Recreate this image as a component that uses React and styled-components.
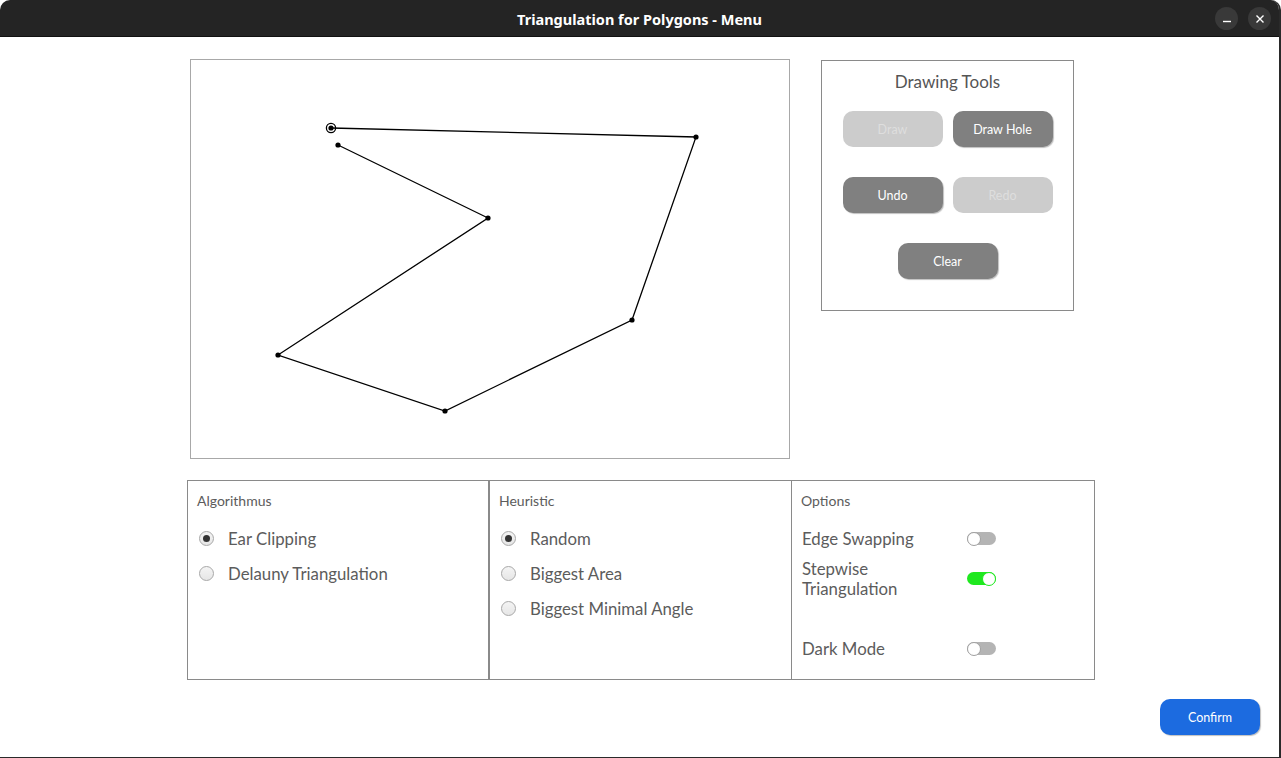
import styled, { createGlobalStyle } from 'styled-components'

const font = "'Lato', 'Open Sans', sans-serif";

const GlobalStyle = createGlobalStyle`
    html, body {
        margin: 0;
        padding: 0;
        background: #ffffff;
    }
    * {
        box-sizing: border-box;
    }
`

const points = [
    [140, 68], [505, 77], [441, 260], [254, 351], [87, 295], [297, 158], [147, 85]
]

function Radio({ label, checked }) {
    return (
        <RadioRow>
            <RadioCircle checked={checked} />
            <RadioText>{label}</RadioText>
        </RadioRow>
    )
}

function App() {
    return (
        <>
            <GlobalStyle />
            <Window>
                <TitleBar>
                    <Title>Triangulation for Polygons - Menu</Title>
                    <Controls>
                        <CtrlButton>
                            <svg width="10" height="10" viewBox="0 0 10 10">
                                <line x1="1" y1="7.5" x2="9" y2="7.5" stroke="#fff" strokeWidth="1.4" />
                            </svg>
                        </CtrlButton>
                        <CtrlButton>
                            <svg width="10" height="10" viewBox="0 0 10 10">
                                <path d="M1.5 1.5 L8.5 8.5 M8.5 1.5 L1.5 8.5" stroke="#fff" strokeWidth="1.4" />
                            </svg>
                        </CtrlButton>
                    </Controls>
                </TitleBar>
                <Content>
                    <TopRow>
                        <Canvas>
                            <svg width="598" height="398" viewBox="0 0 598 398">
                                <polyline
                                    points={points.map(p => p.join(',')).join(' ')}
                                    fill="none"
                                    stroke="#000"
                                    strokeWidth="1.3"
                                />
                                {points.map((p, i) => (
                                    <circle key={i} cx={p[0]} cy={p[1]} r="2.6" fill="#000" />
                                ))}
                                <circle cx={points[0][0]} cy={points[0][1]} r="4.6" fill="none" stroke="#000" strokeWidth="1.3" />
                            </svg>
                        </Canvas>
                        <ToolsPanel>
                            <ToolsTitle>Drawing Tools</ToolsTitle>
                            <ToolsGrid>
                                <ToolButton disabled>Draw</ToolButton>
                                <ToolButton>Draw Hole</ToolButton>
                                <ToolButton>Undo</ToolButton>
                                <ToolButton disabled>Redo</ToolButton>
                                <ToolButton wide>Clear</ToolButton>
                            </ToolsGrid>
                        </ToolsPanel>
                    </TopRow>
                    <BottomRow>
                        <Group width={302}>
                            <GroupLabel>Algorithmus</GroupLabel>
                            <Radio label="Ear Clipping" checked />
                            <Radio label="Delauny Triangulation" />
                        </Group>
                        <Group width={303} overlap>
                            <GroupLabel>Heuristic</GroupLabel>
                            <Radio label="Random" checked />
                            <Radio label="Biggest Area" />
                            <Radio label="Biggest Minimal Angle" />
                        </Group>
                        <Group width={304}>
                            <GroupLabel>Options</GroupLabel>
                            <OptionRow>
                                <OptionText>Edge Swapping</OptionText>
                                <Toggle />
                            </OptionRow>
                            <OptionRow tall>
                                <OptionText>Stepwise<br />Triangulation</OptionText>
                                <Toggle on />
                            </OptionRow>
                            <OptionRow gap>
                                <OptionText>Dark Mode</OptionText>
                                <Toggle />
                            </OptionRow>
                        </Group>
                    </BottomRow>
                    <Footer>
                        <ConfirmButton>Confirm</ConfirmButton>
                    </Footer>
                </Content>
            </Window>
        </>
    )
}

const Window = styled.div`
    width: 1281px;
    height: 758px;
    display: flex;
    flex-direction: column;
    background: #ffffff;
    border-right: 2px solid #2a2a2a;
    border-bottom: 1px solid #2a2a2a;
    border-radius: 10px 10px 0 0;
    overflow: hidden;
`

const TitleBar = styled.div`
    height: 37px;
    flex-shrink: 0;
    background: #242424;
    border-bottom: 1px solid #111;
    display: flex;
    align-items: center;
    justify-content: center;
    position: relative;
`

const Title = styled.div`
    font-family: 'Noto Sans', 'DejaVu Sans', sans-serif;
    font-weight: 700;
    font-size: 14.5px;
    color: #ffffff;
    margin-top: 1px;
`

const Controls = styled.div`
    position: absolute;
    right: 8px;
    top: 7px;
    display: flex;
    gap: 10px;
`

const CtrlButton = styled.div`
    width: 23px;
    height: 23px;
    border-radius: 50%;
    background: #393939;
    display: flex;
    align-items: center;
    justify-content: center;
`

const Content = styled.div`
    flex: 1;
    display: flex;
    flex-direction: column;
`

const TopRow = styled.div`
    display: flex;
    align-items: flex-start;
    gap: 31px;
    margin-top: 22px;
    margin-left: 190px;
`

const Canvas = styled.div`
    width: 600px;
    height: 400px;
    border: 1px solid #a8a8a8;
    background: #ffffff;
    svg {
        display: block;
    }
`

const ToolsPanel = styled.div`
    margin-top: 1px;
    width: 253px;
    height: 251px;
    border: 1px solid #8a8a8a;
    display: flex;
    flex-direction: column;
    align-items: center;
`

const ToolsTitle = styled.div`
    font-family: ${font};
    font-size: 17px;
    color: #555;
    margin-top: 11px;
    line-height: 20px;
`

const ToolsGrid = styled.div`
    margin-top: 19px;
    display: grid;
    grid-template-columns: 100px 100px;
    column-gap: 10px;
    row-gap: 30px;
    justify-content: center;
`

const ToolButton = styled.button`
    font-family: ${font};
    font-size: 12.5px;
    width: 100px;
    height: 36px;
    border: none;
    border-radius: 10px;
    background: ${p => p.disabled ? '#cccccc' : '#808080'};
    color: ${p => p.disabled ? '#dedede' : '#ffffff'};
    box-shadow: ${p => p.disabled ? 'none' : '1px 1px 1px rgba(0,0,0,0.25)'};
    grid-column: ${p => p.wide ? '1 / span 2' : 'auto'};
    justify-self: center;
    padding: 0;
`

const BottomRow = styled.div`
    display: flex;
    margin-top: 21px;
    margin-left: 187px;
`

const Group = styled.div`
    width: ${p => p.width}px;
    height: 200px;
    border: 1px solid #8a8a8a;
    margin-right: ${p => p.overlap ? '-1px' : '0'};
    padding: 11px 9px 0 9px;
    display: flex;
    flex-direction: column;
`

const GroupLabel = styled.div`
    font-family: ${font};
    font-size: 14px;
    color: #5c5c5c;
    line-height: 18px;
    margin-bottom: 11px;
`

const RadioRow = styled.div`
    display: flex;
    align-items: center;
    height: 35px;
`

const RadioCircle = styled.span`
    width: 15px;
    height: 15px;
    border-radius: 50%;
    border: 1px solid #a8a8a8;
    background: linear-gradient(#f4f4f4, #e6e6e6);
    display: flex;
    align-items: center;
    justify-content: center;
    margin-left: 2px;
    &::after {
        content: '';
        width: 7px;
        height: 7px;
        border-radius: 50%;
        background: #333;
        display: ${p => p.checked ? 'block' : 'none'};
    }
`

const RadioText = styled.span`
    font-family: ${font};
    font-size: 16.8px;
    color: #5c5c5c;
    margin-left: 14px;
`

const OptionRow = styled.div`
    display: flex;
    align-items: center;
    height: ${p => p.tall ? '45px' : '35px'};
    margin-top: ${p => p.gap ? '30px' : '0'};
    padding-left: 1px;
`

const OptionText = styled.div`
    font-family: ${font};
    font-size: 16.8px;
    color: #5c5c5c;
    line-height: 20px;
    width: 165px;
`

const Toggle = styled.span`
    width: 29px;
    height: 13px;
    border-radius: 7px;
    background: ${p => p.on ? '#1fe81f' : '#b4b4b4'};
    position: relative;
    &::after {
        content: '';
        position: absolute;
        top: -0.5px;
        left: ${p => p.on ? '15px' : '0'};
        width: 14px;
        height: 14px;
        border-radius: 50%;
        background: #ffffff;
        border: 1px solid ${p => p.on ? '#1fe81f' : '#a0a0a0'};
        box-sizing: border-box;
    }
`

const Footer = styled.div`
    display: flex;
    justify-content: flex-end;
    margin-top: 19px;
    margin-right: 19px;
`

const ConfirmButton = styled.button`
    font-family: ${font};
    font-size: 12.5px;
    width: 100px;
    height: 36px;
    border: none;
    border-radius: 10px;
    background: #1c6be0;
    color: #ffffff;
    box-shadow: 1px 1px 1px rgba(0,0,0,0.25);
    padding: 0;
`

export default App;
